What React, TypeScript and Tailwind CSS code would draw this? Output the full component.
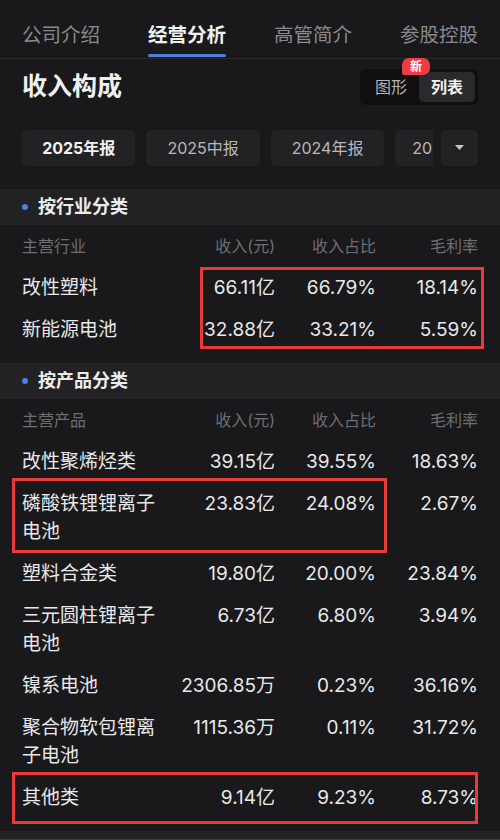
const TABS = ["公司介绍", "经营分析", "高管简介", "参股控股"];
const YEARS = ["2025年报", "2025中报", "2024年报"];

type Row = { name: string; revenue: string; share: string; margin: string };

const INDUSTRY: Row[] = [
  { name: "改性塑料", revenue: "66.11亿", share: "66.79%", margin: "18.14%" },
  { name: "新能源电池", revenue: "32.88亿", share: "33.21%", margin: "5.59%" },
];

const PRODUCTS: Row[] = [
  { name: "改性聚烯烃类", revenue: "39.15亿", share: "39.55%", margin: "18.63%" },
  { name: "磷酸铁锂锂离子电池", revenue: "23.83亿", share: "24.08%", margin: "2.67%" },
  { name: "塑料合金类", revenue: "19.80亿", share: "20.00%", margin: "23.84%" },
  { name: "三元圆柱锂离子电池", revenue: "6.73亿", share: "6.80%", margin: "3.94%" },
  { name: "镍系电池", revenue: "2306.85万", share: "0.23%", margin: "36.16%" },
  { name: "聚合物软包锂离子电池", revenue: "1115.36万", share: "0.11%", margin: "31.72%" },
  { name: "其他类", revenue: "9.14亿", share: "9.23%", margin: "8.73%" },
];

const grid = "grid grid-cols-[145px_108px_101px_102px]";

function SectionHeader({ title }: { title: string }) {
  return (
    <div className="flex items-center h-[36px] bg-[#222224] px-[22px]">
      <span className="w-[6px] h-[6px] rounded-full bg-[#4d7fe6] mr-[10px]" />
      <span className="text-[18px] font-bold text-[#ececec]">{title}</span>
    </div>
  );
}

function HeadRow({ first }: { first: string }) {
  return (
    <div className={`${grid} px-[22px] h-[42px] items-center text-[16px] text-[#6e6e72]`}>
      <span>{first}</span>
      <span className="text-right">收入(元)</span>
      <span className="text-right">收入占比</span>
      <span className="text-right">毛利率</span>
    </div>
  );
}

function DataRow({ row, box }: { row: Row; box?: string }) {
  return (
    <div className={`relative ${grid} px-[22px] py-[7px] items-start text-[19px] leading-[28px] text-[#e8e8ea]`}>
      <span className="pr-[8px]">{row.name}</span>
      <span className="text-right">{row.revenue}</span>
      <span className="text-right">{row.share}</span>
      <span className="text-right">{row.margin}</span>
      {box && <div className={`absolute border-[3px] border-[#e93a3a] pointer-events-none ${box}`} />}
    </div>
  );
}

export default function App() {
  return (
    <div
      className="w-[500px] h-[840px] overflow-hidden bg-[#19191b] text-[#e8e8ea]"
      style={{ fontFamily: 'Inter, "Noto Sans CJK SC", sans-serif' }}
    >
      {/* Tabs */}
      <div className="flex justify-between px-[22px] pt-[21px] border-b border-[#2a2a2d]">
        {TABS.map((t, i) => (
          <div key={t} className="relative pb-[9px]">
            <span className={`text-[19.5px] leading-[28px] ${i === 1 ? "font-bold text-[#f0f0f0]" : "text-[#8a8a8e]"}`}>
              {t}
            </span>
            {i === 1 && (
              <span className="absolute left-0 right-0 bottom-[1px] h-[3px] rounded-full bg-[#4f7fd8]" />
            )}
          </div>
        ))}
      </div>

      {/* Title + toggle */}
      <div className="flex items-center justify-between px-[22px] pt-[9px]">
        <h1 className="text-[25px] font-bold text-[#f0f0f0]">收入构成</h1>
        <div className="relative flex items-center h-[36px] w-[118px] rounded-[6px] bg-[#0f0f10] p-[3px]">
          <span className="flex-1 text-center text-[16px] text-[#b5b5b8]">图形</span>
          <span className="flex items-center justify-center w-[56px] h-full rounded-[5px] bg-[#2a2a2d] text-[16px] font-bold text-[#f0f0f0]">
            列表
          </span>
          <span className="absolute -top-[11px] left-[42px] h-[17px] px-[8px] rounded-[7px] rounded-bl-[2px] bg-[#ee3b44] text-[12px] leading-[17px] font-bold text-white">
            新
          </span>
        </div>
      </div>

      {/* Year filters */}
      <div className="flex items-center gap-[11px] px-[22px] mt-[24px]">
        {YEARS.map((y, i) => (
          <div
            key={y}
            className={`flex items-center justify-center w-[114px] h-[36px] rounded-[5px] bg-[#222224] text-[16px] ${
              i === 0 ? "font-bold text-[#f0f0f0]" : "text-[#b8b8bb]"
            }`}
          >
            {y}
          </div>
        ))}
        <div className="w-[38px] h-[36px] rounded-l-[5px] bg-[#222224] overflow-hidden flex items-center pl-[17px] text-[16px] text-[#b8b8bb]">
          20
        </div>
        <div className="ml-[-3px] w-[37px] h-[36px] rounded-[5px] bg-[#222224] flex items-center justify-center">
          <svg width="11" height="7" viewBox="0 0 11 7">
            <path d="M1 1h9L5.5 6z" fill="#c8c8cc" />
          </svg>
        </div>
      </div>

      {/* By industry */}
      <div className="mt-[23px]">
        <SectionHeader title="按行业分类" />
        <HeadRow first="主营行业" />
        <div className="relative">
          {INDUSTRY.map((r) => (
            <DataRow key={r.name} row={r} />
          ))}
          <div className="absolute left-[200px] top-0 w-[284px] h-[82px] border-[3px] border-[#e93a3a]" />
        </div>
      </div>

      {/* By product */}
      <div className="mt-[12px]">
        <SectionHeader title="按产品分类" />
        <HeadRow first="主营产品" />
        {PRODUCTS.map((r, i) => (
          <DataRow
            key={r.name}
            row={r}
            box={
              i === 1
                ? "left-[12px] -top-[5px] w-[375px] h-[75px]"
                : i === 6
                  ? "left-[12px] -top-[5px] w-[466px] h-[52px]"
                  : undefined
            }
          />
        ))}
      </div>

      {/* bottom edge */}
      <div className="mt-[12px] h-[10px] bg-[#232325] border-b-2 border-[#3a3a3c]" />
    </div>
  );
}
